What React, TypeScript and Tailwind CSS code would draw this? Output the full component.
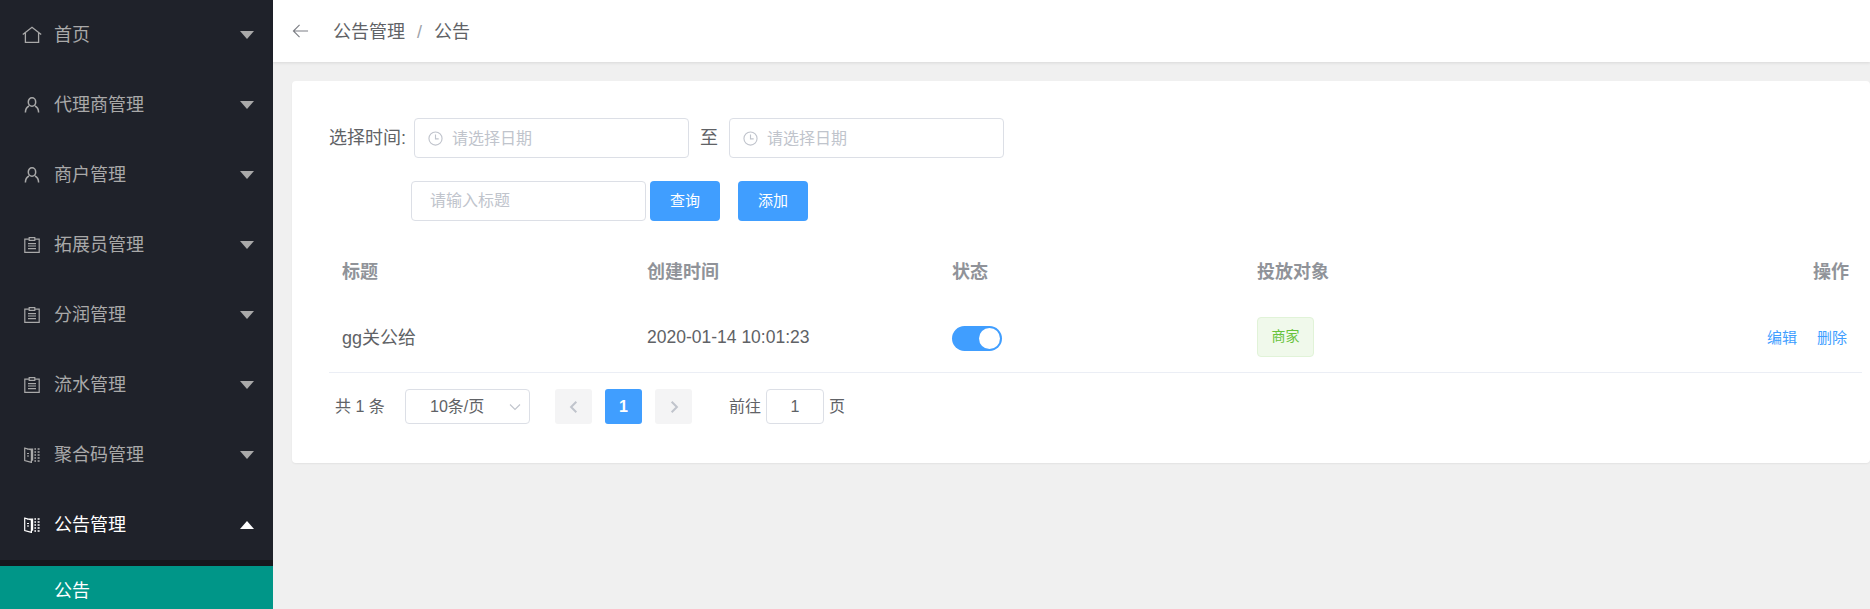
import type { ReactNode } from "react";

const font = "[font-family:'Liberation_Sans','Noto_Sans_CJK_SC',sans-serif]";

function HomeIcon() {
  return (
    <svg viewBox="0 0 16 16" className="w-4 h-4 overflow-visible" fill="none" stroke="currentColor" strokeWidth="1.3">
      <path d="M-1.2 7.5 8 .3l9.2 7.2M1.4 5.8v9.5h13.2V5.8" />
    </svg>
  );
}

function UserIcon() {
  return (
    <svg viewBox="0 0 16 16" className="w-4 h-4" fill="none" stroke="currentColor" strokeWidth="1.5">
      <ellipse cx="8" cy="5" rx="3.7" ry="4.2" />
      <path d="M1.4 15.6c0-3.4 1.5-5.6 3.6-6.6M14.6 15.6c0-3.4-1.5-5.6-3.6-6.6" />
    </svg>
  );
}

function ClipboardIcon() {
  return (
    <svg viewBox="0 0 16 16" className="w-4 h-4" fill="none" stroke="currentColor" strokeWidth="1.2">
      <path d="M5 2.2H.8v13.2h14.4V2.2H11" />
      <path d="M5.2.6h5.6v2.8H5.2zM4 6.6h8M4 9h8M4 11.6h8" />
    </svg>
  );
}

function BookIcon() {
  return (
    <svg viewBox="0 0 16 16" className="w-4 h-4" fill="none" stroke="currentColor" strokeWidth="1.2">
      <path d="M.7 1.2 7.4 3v12.4L.7 13.6zM3 2.2h5.6v11H7.4M3 6.5h2M3 9h2" />
      <path d="M10.4 2h1.6M13.6 2h2M10.4 5h1.6M13.6 5h2M10.4 8h1.6M13.6 8h2M10.4 11h1.6M13.6 11h2M10.4 14h1.6M13.6 14h2" strokeWidth="1.6" />
    </svg>
  );
}

function ClockIcon() {
  return (
    <svg viewBox="0 0 16 16" className="w-[15px] h-[15px] text-[#c0c4cc]" fill="none" stroke="currentColor" strokeWidth="1.2">
      <circle cx="8" cy="8" r="7" />
      <path d="M8 3.8V8.4h3.4" />
    </svg>
  );
}

const menu = [
  { label: "首页", icon: <HomeIcon /> },
  { label: "代理商管理", icon: <UserIcon /> },
  { label: "商户管理", icon: <UserIcon /> },
  { label: "拓展员管理", icon: <ClipboardIcon /> },
  { label: "分润管理", icon: <ClipboardIcon /> },
  { label: "流水管理", icon: <ClipboardIcon /> },
  { label: "聚合码管理", icon: <BookIcon /> },
  { label: "公告管理", icon: <BookIcon />, open: true },
];

function DateInput() {
  return (
    <div className="w-[275px] h-10 border border-[#dcdfe6] rounded bg-white flex items-center pl-[13px]">
      <ClockIcon />
      <span className="ml-[9px] pt-[1px] text-base text-[#c0c4cc]">请选择日期</span>
    </div>
  );
}

function PageButton({ children, active }: { children: ReactNode; active?: boolean }) {
  return (
    <div
      className={`w-[37px] h-[35px] rounded-[3px] flex items-center justify-center ${
        active ? "bg-[#409eff] text-white font-bold text-base" : "bg-[#f4f4f5] text-[#c0c4cc]"
      }`}
    >
      {children}
    </div>
  );
}

export default function App() {
  return (
    <div className={`flex h-screen overflow-hidden bg-[#f0f0f0] ${font}`}>
      {/* 侧边栏 */}
      <aside className="w-[273px] shrink-0 bg-[#1f222a] overflow-hidden">
        {menu.map((item) => (
          <div
            key={item.label}
            className={`h-[70px] flex items-center pl-6 pr-[19px] ${item.open ? "text-white" : "text-[#a9a9a9]"}`}
          >
            {item.icon}
            <span className="ml-[14px] text-lg flex-1">{item.label}</span>
            <span
              className={`w-0 h-0 border-x-[7px] border-x-transparent ${
                item.open ? "border-b-[8px] border-b-white" : "border-t-[8px] border-t-[#a9a9a9]"
              }`}
            />
          </div>
        ))}
        <div className="pt-[6px] bg-[#16181d]">
          <div className="h-[50px] bg-[#009688] text-white text-lg pl-[54px] leading-[50px]">公告</div>
        </div>
      </aside>

      <div className="flex-1 min-w-0 flex flex-col">
        {/* 顶部面包屑 */}
        <header className="h-[62px] shrink-0 bg-white shadow-[0_1px_3px_rgba(0,0,0,0.1)] flex items-center pl-[19px] text-lg text-[#606266]">
          <svg viewBox="0 0 18 18" className="w-[17px] h-[18px] text-[#7d7f85]" fill="none" stroke="currentColor" strokeWidth="1.2">
            <path d="M17 9H1.5M8 2.5 1.5 9 8 15.5" />
          </svg>
          <span className="ml-6 pt-[2px]">公告管理</span>
          <span className="mx-3 pt-[2px] text-[#a0a3a9]">/</span>
          <span className="pt-[2px]">公告</span>
        </header>

        <main className="pt-[19px] pl-[19px]">
          <section className="h-[382px] bg-white rounded shadow-[0_1px_2px_rgba(0,0,0,0.06)] pt-[37px] pl-[37px] pr-2">
            <div className="flex items-center h-10 text-lg text-[#606266]">
              <span className="w-[85px]">选择时间:</span>
              <DateInput />
              <span className="ml-[11px] mr-3 w-[17px]">至</span>
              <DateInput />
            </div>

            <div className="flex items-center mt-[23px] ml-[82px]">
              <div className="w-[235px] h-10 border border-[#dcdfe6] rounded pl-[18px] flex items-center text-base text-[#c0c4cc]">
                请输入标题
              </div>
              <button className="ml-1 w-[70px] h-10 bg-[#409eff] text-white text-[15px] rounded">查询</button>
              <button className="ml-[18px] w-[70px] h-10 bg-[#409eff] text-white text-[15px] rounded">添加</button>
            </div>

            <div className="mt-[31px]">
              <div className="grid grid-cols-[305px_305px_305px_1fr_auto] items-center h-[40px] pl-[13px] pr-[13px] text-lg font-bold text-[#909399]">
                <span>标题</span>
                <span>创建时间</span>
                <span>状态</span>
                <span>投放对象</span>
                <span>操作</span>
              </div>
              <div className="grid grid-cols-[305px_305px_305px_1fr_auto] items-center h-[80px] pl-[13px] pr-[15px] border-b border-[#ebeef5] pt-[10px] text-lg text-[#606266] mt-[1px]">
                <span>gg关公给</span>
                <span className="text-[17.5px]">2020-01-14 10:01:23</span>
                <span className="relative mt-[2px] w-[50px] h-[25px] rounded-full bg-[#409eff]">
                  <span className="absolute right-[2px] top-[2px] w-[21px] h-[21px] rounded-full bg-white" />
                </span>
                <span className="mb-[2px] w-[57px] h-10 rounded border border-[#e1f3d8] bg-[#f0f9eb] text-[#67c23a] text-[14px] flex items-center justify-center">
                  商家
                </span>
                <span className="text-[15px] text-[#409eff] flex gap-[20px]">
                  <span>编辑</span>
                  <span>删除</span>
                </span>
              </div>
            </div>

            {/* 分页 */}
            <div className="flex items-center mt-[16px] ml-[6px] text-base text-[#606266]">
              <span className="w-[70px]">共 1 条</span>
              <div className="w-[125px] h-[35px] border border-[#dcdfe6] rounded flex items-center pl-6 pr-[8px] justify-between">
                <span>10条/页</span>
                <svg viewBox="0 0 12 12" className="w-3 h-3 text-[#c0c4cc]" fill="none" stroke="currentColor" strokeWidth="1.1">
                  <path d="M1 3.5 6 8.5l5-5" />
                </svg>
              </div>
              <div className="ml-[25px] flex gap-[13px]">
                <PageButton>
                  <svg viewBox="0 0 12 12" className="w-[14px] h-[14px]" fill="none" stroke="currentColor" strokeWidth="1.7">
                    <path d="M8 1.5 3.5 6 8 10.5" />
                  </svg>
                </PageButton>
                <PageButton active>1</PageButton>
                <PageButton>
                  <svg viewBox="0 0 12 12" className="w-[14px] h-[14px]" fill="none" stroke="currentColor" strokeWidth="1.7">
                    <path d="M4 1.5 8.5 6 4 10.5" />
                  </svg>
                </PageButton>
              </div>
              <span className="ml-[37px]">前往</span>
              <div className="ml-[5px] w-[58px] h-[35px] border border-[#dcdfe6] rounded flex items-center justify-center">1</div>
              <span className="ml-[5px]">页</span>
            </div>
          </section>
        </main>
      </div>
    </div>
  );
}
